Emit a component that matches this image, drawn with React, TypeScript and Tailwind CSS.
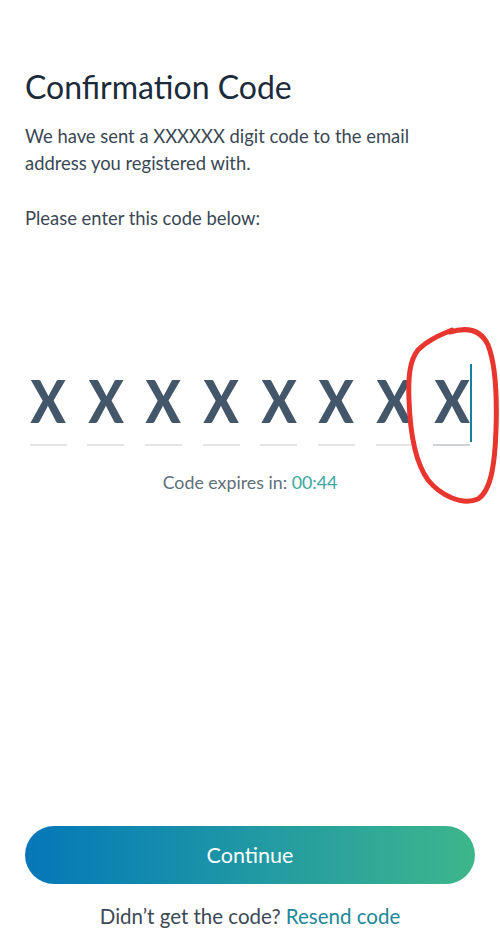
import React from "react";

export default function App() {
  const digits = ["X", "X", "X", "X", "X", "X", "X", "X"];
  return (
    <div className="relative w-[500px] h-[948px] bg-white flex flex-col px-[25px] overflow-hidden" style={{ fontFamily: "Lato, 'Noto Sans', sans-serif" }}>
      <h1 className="mt-[67px] text-[32px] leading-[40px] text-[#1b2b3b] font-normal">Confirmation Code</h1>
      <p className="mt-[16px] text-[18.4px] leading-[27px] text-[#3a4754]">
        We have sent a XXXXXX digit code to the email address you registered with.
      </p>
      <p className="mt-[28px] text-[18.4px] leading-[27px] text-[#3a4754]">Please enter this code below:</p>

      <div className="mt-[134px] flex justify-between pl-[5px] pr-[5px]">
        {digits.map((d, i) => (
          <div key={i} className="relative flex flex-col items-center w-[36px]">
            <span className="inline-block scale-x-[0.88] text-[59px] leading-[70px] font-black text-[#44566a]">{d}</span>
            <div className={`mt-[8px] h-[2px] w-[37px] ${i === 7 ? "bg-[#cfd3d6]" : "bg-[#e3e5e7]"}`} />
            {i === 7 && <div className="absolute right-[-2px] top-[-2px] w-[2px] h-[78px] bg-[#1a7ea3]" />}
          </div>
        ))}
      </div>

      <p className="mt-[24px] text-center text-[17.8px] leading-[24px] text-[#5f6f7a]">
        Code expires in: <span className="text-[#3ba7a1]">00:44</span>
      </p>

      <div className="flex-1" />

      <button className="h-[58px] w-full rounded-full bg-gradient-to-r from-[#0677b8] to-[#3db68a] text-white text-[21.5px]">
        Continue
      </button>
      <p className="mt-[17px] mb-[17px] text-center text-[20.5px] leading-[30px] text-[#3d4955]">
        Didn’t get the code? <span className="text-[#1e8799]">Resend code</span>
      </p>

      <svg className="absolute left-0 top-0 pointer-events-none" width="500" height="948" viewBox="0 0 500 948">
        <path
          d="M450 332 C470 326 482 332 488 345 C496 365 497 400 496 430 C495 460 492 490 478 499 C462 506 440 495 428 480 C415 462 410 430 409 400 C408 375 410 360 418 350 C428 340 440 335 452 330"
          fill="none"
          stroke="#e8352e"
          strokeWidth="5"
          strokeLinecap="round"
          strokeLinejoin="round"
        />
      </svg>
    </div>
  );
}
